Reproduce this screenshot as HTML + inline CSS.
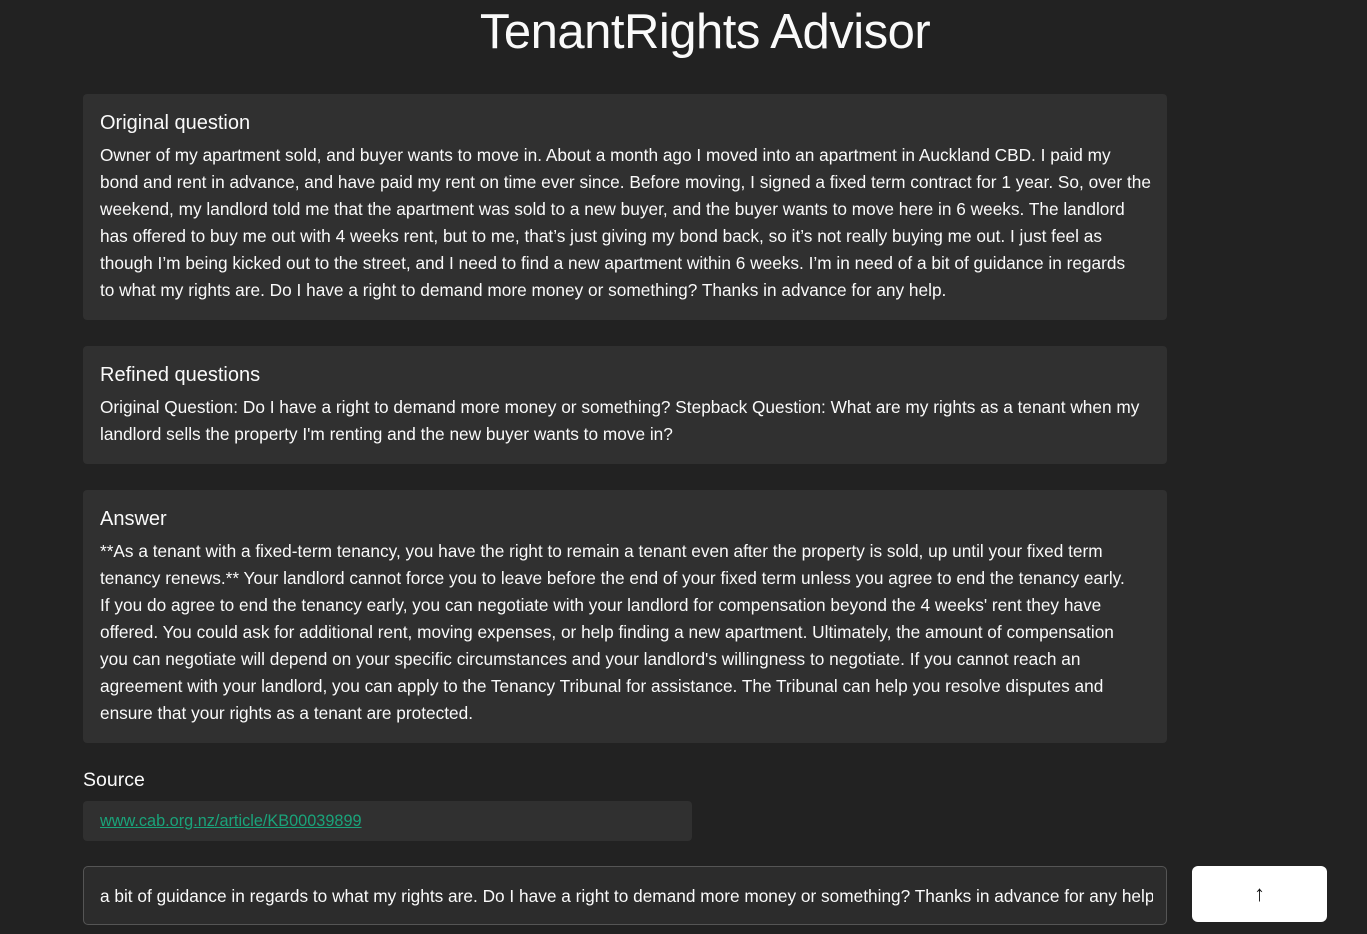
<!DOCTYPE html>
<html><head><style>
body{margin:0;background:#222222;width:1367px;height:934px;overflow:hidden;font-family:"Liberation Sans",sans-serif;color:#fafafa;position:relative}
h1{position:absolute;top:4px;left:0;width:1410px;text-align:center;margin:0;font-weight:normal;font-size:49px;letter-spacing:-0.5px}
.card{position:absolute;left:83px;width:1084px;background:#303030;border-radius:4px;box-sizing:border-box;padding:0 17px}
.t{font-size:20px;position:absolute;left:17px;white-space:nowrap}
.l{position:absolute;left:17px;font-size:17.25px;line-height:27px;white-space:pre;letter-spacing:0}
</style></head><body>
<h1>TenantRights Advisor</h1>
<div class="card" style="top:94px;height:226px">
<div class="t" style="top:18px">Original question</div>
<div class="l" style="top:48px">Owner of my apartment sold, and buyer wants to move in. About a month ago I moved into an apartment in Auckland CBD. I paid my
bond and rent in advance, and have paid my rent on time ever since. Before moving, I signed a fixed term contract for 1 year. So, over the
weekend, my landlord told me that the apartment was sold to a new buyer, and the buyer wants to move here in 6 weeks. The landlord
has offered to buy me out with 4 weeks rent, but to me, that’s just giving my bond back, so it’s not really buying me out. I just feel as
though I’m being kicked out to the street, and I need to find a new apartment within 6 weeks. I’m in need of a bit of guidance in regards
to what my rights are. Do I have a right to demand more money or something? Thanks in advance for any help.</div>
</div>
<div class="card" style="top:346px;height:118px">
<div class="t" style="top:18px">Refined questions</div>
<div class="l" style="top:48px">Original Question: Do I have a right to demand more money or something? Stepback Question: What are my rights as a tenant when my
landlord sells the property I'm renting and the new buyer wants to move in?</div>
</div>
<div class="card" style="top:490px;height:253px">
<div class="t" style="top:18px">Answer</div>
<div class="l" style="top:48px">**As a tenant with a fixed-term tenancy, you have the right to remain a tenant even after the property is sold, up until your fixed term
tenancy renews.** Your landlord cannot force you to leave before the end of your fixed term unless you agree to end the tenancy early.
If you do agree to end the tenancy early, you can negotiate with your landlord for compensation beyond the 4 weeks' rent they have
offered. You could ask for additional rent, moving expenses, or help finding a new apartment. Ultimately, the amount of compensation
you can negotiate will depend on your specific circumstances and your landlord's willingness to negotiate. If you cannot reach an
agreement with your landlord, you can apply to the Tenancy Tribunal for assistance. The Tribunal can help you resolve disputes and
ensure that your rights as a tenant are protected.</div>
</div>
<div style="position:absolute;left:83px;top:769px;font-size:19.5px">Source</div>
<div class="card" style="top:801px;height:40px;width:609px">
<div class="l" style="top:7px;color:#1aa37a;text-decoration:underline;font-size:16.3px">www.cab.org.nz/article/KB00039899</div>
</div>
<div style="position:absolute;left:83px;top:866px;width:1084px;height:59px;box-sizing:border-box;border:1px solid #555;border-radius:5px;background:#2c2c2c;overflow:hidden">
<div style="position:absolute;left:16px;top:0;width:1053px;height:57px;overflow:hidden">
<div class="l" style="top:16px;left:0">a bit of guidance in regards to what my rights are. Do I have a right to demand more money or something? Thanks in advance for any help</div>
</div>
</div>
<div style="position:absolute;left:1192px;top:866px;width:135px;height:56px;background:#fff;border-radius:6px;color:#111;text-align:center;line-height:56px;font-size:22px">↑</div>
</body></html>
